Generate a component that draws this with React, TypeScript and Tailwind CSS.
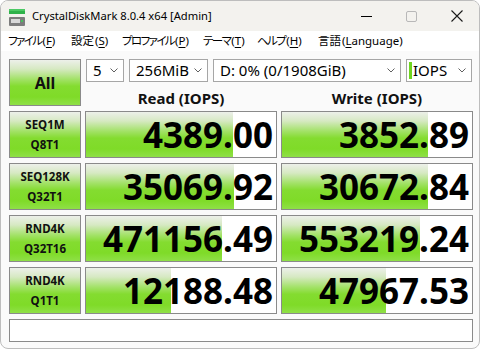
import React from "react";

const GRAD =
  "bg-[linear-gradient(to_bottom,#edf0ea_0%,#d6e9c2_20%,#a4e26a_42%,#84dc30_58%,#7fdb28_82%,#8fe047_100%)]";

type Row = { l1: string; l2: string; r: string; w: string; rf: number; wf: number };

const rows: Row[] = [
  { l1: "SEQ1M", l2: "Q8T1", r: "4389.00", w: "3852.89", rf: 147, wf: 146 },
  { l1: "SEQ128K", l2: "Q32T1", r: "35069.92", w: "30672.84", rf: 148, wf: 146 },
  { l1: "RND4K", l2: "Q32T16", r: "471156.49", w: "553219.24", rf: 136, wf: 138 },
  { l1: "RND4K", l2: "Q1T1", r: "12188.48", w: "47967.53", rf: 85, wf: 104 },
];

function Chevron() {
  return (
    <svg width="8" height="5" viewBox="0 0 8 5" className="shrink-0">
      <polyline points="0.5,0.5 4,4 7.5,0.5" fill="none" stroke="#606060" strokeWidth="1" />
    </svg>
  );
}

function Combo({ w, text, bar }: { w: string; text: string; bar?: boolean }) {
  return (
    <div
      className={`${w} h-[23px] bg-white border border-[#a6a6a6] flex items-center pr-[5px] text-[15px] leading-none text-black`}
    >
      {bar ? (
        <div className="ml-[2px] mr-[1px] w-[3px] h-[17px] bg-[#6fd51f] shrink-0" />
      ) : (
        <div className="w-[6px] shrink-0" />
      )}
      <span className="flex-1 whitespace-nowrap">{text}</span>
      <Chevron />
    </div>
  );
}

function Bar({ value, fill }: { value: string; fill: number }) {
  return (
    <div className="relative h-[47px] bg-white border border-[#8a8a8a] overflow-hidden">
      <div className={`absolute left-0 top-0 bottom-0 ${GRAD}`} style={{ width: fill }} />
      <div className="relative h-full flex items-center justify-end pr-[3px] text-[35px] font-bold leading-[47px] text-black">
        {value}
      </div>
    </div>
  );
}

function Label({ l1, l2 }: { l1: string; l2: string }) {
  return (
    <div
      className={`h-[47px] border border-[#8a8a8a] ${GRAD} flex flex-col items-center justify-center text-[11.5px] font-bold leading-[20px] text-[#111]`}
    >
      <span>{l1}</span>
      <span>{l2}</span>
    </div>
  );
}

function MenuItem({
  pre,
  acc,
  post,
  w,
  kana,
}: {
  pre: string;
  acc: string;
  post: string;
  w: string;
  kana?: boolean;
}) {
  return (
    <div className={`${w} shrink-0 whitespace-nowrap`}>
      <span className={kana ? "tracking-[-1.6px]" : "tracking-normal"}>{pre}</span>
      <span className="ml-[1px]">(</span>
      <span className="underline underline-offset-[2px] decoration-[1px]">{acc}</span>
      {post})
    </div>
  );
}

export default function App() {
  return (
    <div
      className="w-[482px] h-[352px] bg-white"
      style={{ fontFamily: "'Noto Sans', 'Noto Sans CJK JP', sans-serif" }}
    >
      <div className="w-[480px] h-[349px] border border-[#bdbdbd] rounded-[8px] overflow-hidden flex flex-col bg-[#fafafa]">
        {/* Title bar */}
        <div className="h-[30px] shrink-0 bg-[#f3f2ee] flex items-center">
          <svg width="16" height="19" viewBox="0 0 16 19" className="ml-[8px] mt-[4px] shrink-0">
            <rect x="0" y="0" width="16" height="5" fill="#2fb24a" />
            <rect x="0" y="0" width="16" height="2" fill="#4cc964" />
            <rect x="0" y="8" width="16" height="9" rx="1" fill="#7d7d7d" />
            <rect x="2" y="10" width="9" height="4" fill="#d8d8d8" />
            <rect x="12" y="11" width="2" height="2" fill="#46c25c" />
          </svg>
          <div className="ml-[7px] text-[11.2px] text-black whitespace-nowrap">
            CrystalDiskMark 8.0.4 x64 [Admin]
          </div>
          <div className="flex-1" />
          <div className="w-[45px] h-full flex items-center justify-center">
            <div className="w-[11px] h-[1px] bg-black" />
          </div>
          <div className="w-[45px] h-full flex items-center justify-center">
            <div className="w-[11px] h-[11px] border border-[#b8b8b8] rounded-[2px]" />
          </div>
          <div className="w-[45px] h-full flex items-center justify-center">
            <svg width="12" height="12" viewBox="0 0 12 12">
              <path d="M0.5 0.5 L11.5 11.5 M11.5 0.5 L0.5 11.5" stroke="#1a1a1a" strokeWidth="1.1" />
            </svg>
          </div>
        </div>

        {/* Menu bar */}
        <div className="h-[20px] shrink-0 bg-white flex items-center pl-[7px] text-[11.5px] text-black [font-feature-settings:'palt']">
          <MenuItem w="w-[63px]" pre="ファイル" acc="F" post="" kana />
          <MenuItem w="w-[51px]" pre="設定" acc="S" post="" />
          <MenuItem w="w-[81px]" pre="プロファイル" acc="P" post="" kana />
          <MenuItem w="w-[54px]" pre="テーマ" acc="T" post="" kana />
          <MenuItem w="w-[61px]" pre="ヘルプ" acc="H" post="" kana />
          <MenuItem w="w-[90px]" pre="言語" acc="L" post="anguage" />
        </div>

        {/* Body */}
        <div className="flex-1 pt-[8px] pl-[8px] pr-[6px] pb-[6px] flex flex-col gap-[5px]">
          <div className="grid grid-cols-[72px_192px_192px] gap-x-[4px] gap-y-[5px]">
            <div
              className={`h-[47px] border border-[#8a8a8a] ${GRAD} flex items-center justify-center text-[16px] font-bold text-[#111]`}
            >
              All
            </div>
            <div className="col-span-2 h-[47px] flex flex-col">
              <div className="flex gap-[5px] px-[1px]">
                <Combo w="w-[38px]" text="5" />
                <Combo w="w-[79px]" text="256MiB" />
                <Combo w="w-[188px]" text="D: 0% (0/1908GiB)" />
                <Combo w="w-[66px]" text="IOPS" bar />
              </div>
              <div className="flex-1 grid grid-cols-[192px_192px] gap-x-[4px] items-end">
                <div className="text-center text-[15px] font-bold leading-[15px] text-[#111]">Read (IOPS)</div>
                <div className="text-center text-[15px] font-bold leading-[15px] text-[#111]">Write (IOPS)</div>
              </div>
            </div>

            {rows.map((r, i) => (
              <React.Fragment key={i}>
                <Label l1={r.l1} l2={r.l2} />
                <Bar value={r.r} fill={r.rf} />
                <Bar value={r.w} fill={r.wf} />
              </React.Fragment>
            ))}
          </div>

          <div className="h-[23px] bg-white border border-[#8a8a8a]" />
        </div>
      </div>
    </div>
  );
}
